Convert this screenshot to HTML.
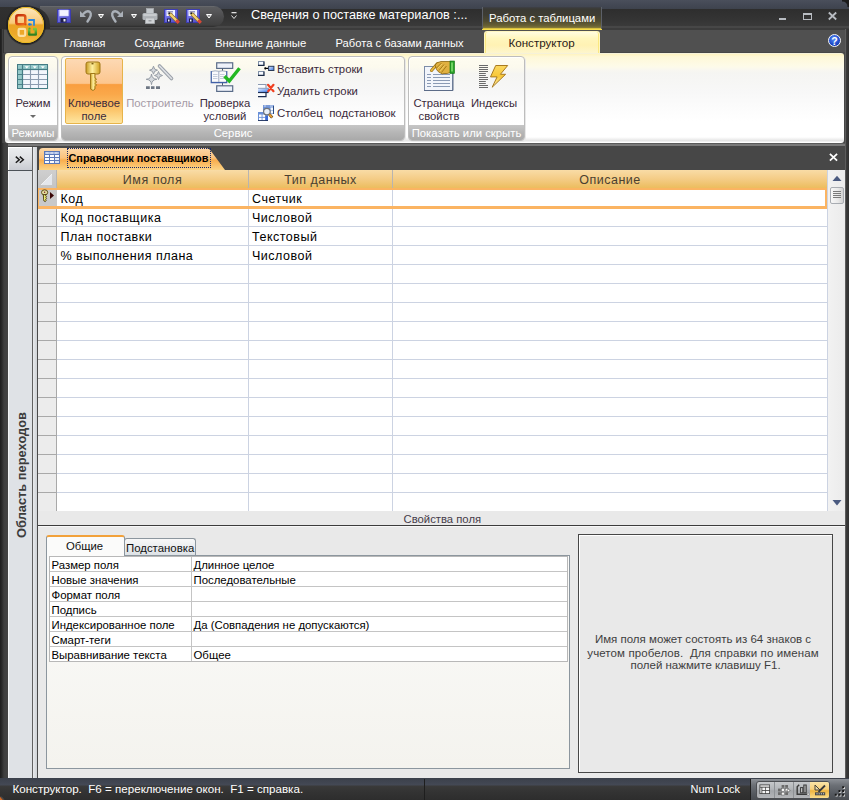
<!DOCTYPE html>
<html><head><meta charset="utf-8">
<style>
*{margin:0;padding:0;box-sizing:border-box}
html,body{width:849px;height:800px;overflow:hidden;background:#2f2f2f;font-family:"Liberation Sans",sans-serif;font-size:12px;color:#000}
.a{position:absolute}
.t{position:absolute;white-space:nowrap;line-height:14px}
svg{position:absolute;overflow:visible}
#title{left:0;top:0;width:849px;height:30px;background:linear-gradient(#4a4f5b 0,#434854 5px,#3e434d 9px,#2e2e2e 9px,#333 18px,#3a3a3a 26px,#474747 26.5px,#474747 28.5px,#3c3c3c 28.5px,#3c3c3c 30px)}
#tabs{left:0;top:30px;width:849px;height:23px;background:linear-gradient(#505050,#505050 22px,#474747 22px)}
#ribbon{left:5px;top:53px;width:839px;height:90px;border-radius:3px 3px 3px 3px;background:linear-gradient(#eceff2 0,#fff4c0 1px,#fef8d8 4px,#fdfbea 14px,#f8f7f0 17px,#f5f5f2 20px,#f8f8f8 40px,#fcfcfc 55px,#fff 68px,#fff 84px,#f8f8f8 85px,#e2e2e2 88px,#fff 89px,#fff 90px)}
#band{left:3px;top:143px;width:842px;height:4px;background:linear-gradient(#5a5a5a 0,#5a5a5a 1px,#7a7a7a 1px,#7a7a7a 3px,#474747 3px)}
.grp{position:absolute;top:56px;height:85px;border:1px solid #bdbdbd;border-radius:4px;background:linear-gradient(#fefcf0 0,#fcfaee 10px,#f5f5f2 17px,#f7f7f7 35px,#fdfdfd 55px,#fff 69px);overflow:hidden;box-shadow:1px 1px 0 #e8e8e8,inset 1px 1px 0 #fff}
.grp .lbl{position:absolute;left:0;right:0;bottom:0;height:15px;background:linear-gradient(#c6c6c6,#b6b6b6 50%,#a9a9a9);color:#fff;text-align:center;font-size:11.3px;line-height:16px}
.btxt{position:absolute;text-align:center;font-size:11.3px;line-height:13px;color:#3b2a3b;white-space:nowrap}
#leftb{left:0;top:143px;width:8px;height:635px;background:linear-gradient(90deg,#1d1d1d 0,#2a2a2a 2px,#353535 3px,#3e3e3e 4px,#434343 8px)}
#rightb{left:845px;top:29px;width:4px;height:749px;background:linear-gradient(90deg,#5c5c5c 0,#5c5c5c 1.5px,#3a3a3a 1.5px,#303030 4px)}
#nav{left:8px;top:147px;width:25px;height:631px;background:#dfe2e6;border-right:1px solid #626262;border-left:1px solid #f2f3f5}
#navbtn{left:8px;top:147px;width:24px;height:24px;background:linear-gradient(#eceef0,#dfe1e4 50%,#c9ccd2);border-bottom:1px solid #4c5258;box-shadow:inset 1px 1px 0 #fff}
#strip{left:33px;top:147px;width:5px;height:631px;background:linear-gradient(90deg,#e8eaec,#cfd2d6);border-right:1px solid #4a4a4a}
#doctabs{left:38px;top:147px;width:807px;height:23px;background:#474747}
#grid{left:38px;top:170px;width:789px;height:341px;background:#fff}
#gridfoot{left:38px;top:511px;width:807px;height:14px;background:#e9e9e9}
#props{left:38px;top:525px;width:807px;height:253px;background:#e9e9e9;border-top:1px solid #3c3c3c;box-shadow:inset 0 1px 0 #f8f8f8}
#status{left:0;top:778px;width:849px;height:22px;background:linear-gradient(#3b404b 0,#444955 7px,#3a3a3a 8px,#333 14px,#2d2d2d 22px)}
.gt{font-size:12.5px;letter-spacing:.5px;color:#000;line-height:14px}
.gh{font-size:12.5px;letter-spacing:.5px;color:#4a4030;line-height:14px}
.pt{font-size:11.4px;color:#000;line-height:14px}
.hx{font-size:11.5px;color:#3e3e3e;text-align:center;line-height:14px}
</style></head><body>
<!-- TITLE -->
<div id="title" class="a"></div>
<svg style="left:842px;top:0" width="7" height="7" viewBox="0 0 7 7"><path d="M0 0 H7 V7 H5.5 Q5.5 1.5 0 1.5Z" fill="#1c1c1c"/></svg>
<div id="tabs" class="a"></div>
<div class="a" style="left:0;top:27px;width:4px;height:120px;background:linear-gradient(90deg,#1d1d1d 0,#262626 1.5px,#464646 2px,#3a3a3a 3px,#2e2e2e 4px)"></div>
<div id="rightb" class="a"></div>
<!-- QAT -->
<div class="a" style="left:40px;top:6px;width:184px;height:21px;border-radius:0 10.5px 10.5px 0;background:linear-gradient(#707276 0,#5c5d60 1px,#555557 6px,#4a4a4b 12px,#404040 19px,#2c2c2c 21px)"></div>
<div class="a" style="left:0px;top:7px;width:50px;height:22px;border-radius:0 18px 0 0;background:linear-gradient(#303030,#2c2c2c)"></div>
<!-- office button -->
<div class="a" style="left:6px;top:5px;width:40px;height:40px;border-radius:50%;background:rgba(30,30,30,.55)"></div>
<div class="a" style="left:8px;top:7px;width:36px;height:36px;border-radius:50%;background:linear-gradient(#fde9c0 0,#f8c878 45%,#eba424 50%,#eda82a 75%,#f6c048 100%);box-shadow:0 0 0 1px #e8b820 inset,0 1px 2px rgba(0,0,0,.6)"></div>
<svg style="left:14px;top:13px" width="24" height="24" viewBox="0 0 24 24">
 <defs><linearGradient id="rg" x1="0" y1="0" x2="1" y2="1"><stop offset="0" stop-color="#c02808"/><stop offset="1" stop-color="#f07020"/></linearGradient>
 <linearGradient id="gg" x1="0" y1="0" x2="0" y2="1"><stop offset="0" stop-color="#80c840"/><stop offset="1" stop-color="#308020"/></linearGradient></defs>
 <rect x="2.3" y="2.2" width="9" height="9" rx="2" fill="none" stroke="url(#rg)" stroke-width="2.5"/>
 <path d="M15 7 H20 V12 M15 11.5 H17" fill="none" stroke="#2a88e0" stroke-width="1.8" stroke-linecap="round"/>
 <rect x="4.6" y="15.8" width="6.6" height="7" rx="1.2" fill="none" stroke="#fde6b0" stroke-width="2.2" opacity=".9"/>
 <path d="M15.2 16 V21.6 H21.8 V16 H19" fill="none" stroke="url(#gg)" stroke-width="2.4" stroke-linejoin="round"/>
 <circle cx="11.5" cy="11.3" r="1.1" fill="#e05010"/><circle cx="15.5" cy="11.3" r="1.1" fill="#2070d0"/><circle cx="15.5" cy="15.5" r="1.1" fill="#50b030"/>
</svg>
<!-- save -->
<svg style="left:57px;top:9px" width="14" height="14" viewBox="0 0 14 14">
 <defs><linearGradient id="fl" x1="0" y1="0" x2="1" y2="1"><stop offset="0" stop-color="#8484f0"/><stop offset="1" stop-color="#4c4cc8"/></linearGradient></defs>
 <rect x="0.5" y="0.5" width="13" height="13" fill="url(#fl)" stroke="#3c3cb0"/>
 <rect x="2.5" y="1" width="9" height="6" fill="#f4f4ff"/><rect x="2.5" y="1" width="9" height="6" fill="none" stroke="#c8c8f0" stroke-width=".5"/>
 <rect x="3.5" y="9" width="6" height="4.5" fill="#20204a"/><rect x="6.5" y="10" width="2" height="2.5" fill="#f0f0ff"/>
</svg>
<!-- undo -->
<svg style="left:79px;top:9px" width="14" height="14" viewBox="0 0 14 14">
 <path d="M1 2 V8 H7Z" fill="#aab0b8"/><path d="M4.5 4.8 Q8 0.8 11 3 Q13.5 5.5 8.5 12.5" fill="none" stroke="#aab0b8" stroke-width="2.4" stroke-linecap="round"/>
</svg>
<svg style="left:97.5px;top:14px" width="6" height="4.5" viewBox="0 0 6 4.5"><path d="M0.5 0.5H5.5L3 4Z" fill="#8a8a8a" stroke="#fff" stroke-width="1" stroke-linejoin="round"/></svg>
<svg style="left:110px;top:9px" width="14" height="14" viewBox="0 0 14 14">
 <path d="M13 2 V8 H7Z" fill="#aab0b8"/><path d="M9.5 4.8 Q6 0.8 3 3 Q0.5 5.5 5.5 12.5" fill="none" stroke="#aab0b8" stroke-width="2.4" stroke-linecap="round"/>
</svg>
<svg style="left:130.5px;top:14px" width="6" height="4.5" viewBox="0 0 6 4.5"><path d="M0.5 0.5H5.5L3 4Z" fill="#8a8a8a" stroke="#fff" stroke-width="1" stroke-linejoin="round"/></svg>
<!-- print -->
<svg style="left:142px;top:8px" width="16" height="16" viewBox="0 0 16 16">
 <rect x="4.5" y="0.5" width="7" height="5" fill="#c4c8cc" stroke="#a8acb0" stroke-width=".8"/>
 <rect x="0.5" y="5" width="15" height="7" rx="1.5" fill="#b0b4b8"/><rect x="1.5" y="6" width="13" height="2" fill="#c8cbce"/>
 <rect x="3.5" y="10" width="9" height="5.5" fill="#d0d3d6" stroke="#a8acb0" stroke-width=".8"/><rect x="6.5" y="12" width="3" height="1.5" fill="#9a9ea2"/>
</svg>
<!-- save pencil x2 -->
<svg style="left:164px;top:9px" width="16" height="14" viewBox="0 0 16 14">
 <rect x="0.5" y="0.5" width="13" height="13" fill="url(#fl)" stroke="#3c3cb0"/>
 <rect x="2.5" y="1" width="8.5" height="6" fill="#f4f4ff"/><path d="M3.5 2.5H9M3.5 4H9" stroke="#7070a0" stroke-width=".7"/>
 <rect x="3" y="9.5" width="4" height="4" fill="#20204a"/><rect x="4" y="10.5" width="1.5" height="2" fill="#f0f0ff"/>
 <path d="M5.5 4.5 L13 12" stroke="#8a6a20" stroke-width="3.6" stroke-linecap="butt"/><path d="M5.5 4.5 L13 12" stroke="#f0d070" stroke-width="2.4"/>
 <path d="M12.2 11.2 L14.8 13.8" stroke="#d84838" stroke-width="3.2"/>
 <path d="M4.6 3.6 L6 5" stroke="#202020" stroke-width="1.6"/>
</svg>
<svg style="left:186px;top:9px" width="16" height="14" viewBox="0 0 16 14">
 <rect x="0.5" y="0.5" width="13" height="13" fill="url(#fl)" stroke="#3c3cb0"/>
 <rect x="2.5" y="1" width="8.5" height="6" fill="#f4f4ff"/><path d="M3.5 2.5H9M3.5 4H9" stroke="#7070a0" stroke-width=".7"/>
 <rect x="3" y="9.5" width="4" height="4" fill="#20204a"/><rect x="4" y="10.5" width="1.5" height="2" fill="#f0f0ff"/>
 <path d="M5.5 4.5 L13 12" stroke="#8a6a20" stroke-width="3.6" stroke-linecap="butt"/><path d="M5.5 4.5 L13 12" stroke="#f0d070" stroke-width="2.4"/>
 <path d="M12.2 11.2 L14.8 13.8" stroke="#d84838" stroke-width="3.2"/>
 <path d="M4.6 3.6 L6 5" stroke="#202020" stroke-width="1.6"/>
</svg>
<svg style="left:206px;top:14px" width="6" height="4.5" viewBox="0 0 6 4.5"><path d="M0.5 0.5H5.5L3 4Z" fill="#8a8a8a" stroke="#fff" stroke-width="1" stroke-linejoin="round"/></svg>
<!-- customize -->
<svg style="left:231px;top:12px" width="6" height="8" viewBox="0 0 6 8"><rect x="0.5" y="0" width="5" height="1.3" fill="#e0e0e0"/><path d="M0.5 3.5 L3 6.5 L5.5 3.5" fill="none" stroke="#e0e0e0" stroke-width="1"/></svg>
<div class="t" style="left:251px;top:8.3px;font-size:12.7px;color:#fff">Сведения о поставке материалов :...</div>
<!-- context tab header -->
<div class="a" style="left:482px;top:7px;width:120px;height:23px;background:linear-gradient(#3e4048 0,#3a3a34 2px,#3e3d33 8px,#4e4a30 14px,#6a6234 19px,#8a7e3a 21px,#d8c040 21.5px,#f6de4a 22.5px,#3a3a3a 23px)"></div>
<div class="a" style="left:482px;top:7px;width:1px;height:22px;background:#5c6068"></div>
<div class="a" style="left:601px;top:7px;width:1px;height:22px;background:#5c6068"></div>
<div class="t" style="left:489px;top:11px;font-size:11.3px;color:#fff">Работа с таблицами</div>
<!-- window buttons -->
<div class="a" style="left:779px;top:18px;width:7px;height:2px;background:#b8bcc2"></div>
<div class="a" style="left:803px;top:13px;width:9px;height:7px;border:1px solid #b8bcc2;border-top-width:2px"></div>
<svg style="left:828px;top:12px" width="9" height="8" viewBox="0 0 9 8"><path d="M0.8 0.5 L8.2 7.5 M8.2 0.5 L0.8 7.5" stroke="#b8bcc2" stroke-width="1.8"/></svg>
<!-- tabs -->
<div class="t" style="left:64px;top:36.4px;font-size:10.9px;color:#fff">Главная</div>
<div class="t" style="left:134.5px;top:36.4px;font-size:11.1px;color:#fff">Создание</div>
<div class="t" style="left:215px;top:36.4px;font-size:11.35px;color:#fff">Внешние данные</div>
<div class="t" style="left:335.5px;top:36.4px;font-size:11.2px;color:#fff">Работа с базами данных</div>
<div class="a" style="left:484px;top:31px;width:116px;height:23px;border-radius:3px 3px 0 0;border:1px solid #fff6c0;border-bottom:0;background:linear-gradient(#fffce0,#fff6bc 30%,#fff2b4 60%,#fdf6d0);box-shadow:inset 1px 0 0 #fae880,inset -1px 0 0 #fae880"></div>
<div class="t" style="left:508.5px;top:36.4px;font-size:11.6px;color:#2a1a1a">Конструктор</div>
<!-- help -->
<div class="a" style="left:828px;top:34px;width:13px;height:13px;border-radius:50%;border:1.2px solid #f4f6fa;background:radial-gradient(circle at 45% 35%,#5a8ef8,#1c48c8 60%,#0a2a90)"></div>
<div class="t" style="left:831.2px;top:33.6px;font-size:10.5px;font-weight:bold;color:#fff;line-height:14px">?</div>

<!-- RIBBON -->
<div class="a" style="left:3px;top:53px;width:842px;height:94px;background:#474747"></div>
<div id="ribbon" class="a"></div>
<div id="band" class="a"></div>
<div id="ribcontent">
<!-- group Режимы -->
<div class="grp" style="left:8px;width:50px"><div class="lbl">Режимы</div></div>
<svg style="left:17px;top:64px" width="32" height="26" viewBox="0 0 32 26">
 <rect x="1.5" y="1.5" width="30" height="24" fill="#d8d8d8" opacity=".5"/>
 <rect x="0.5" y="0.5" width="30" height="24" fill="#f2f6fc" stroke="#447c84"/>
 <rect x="1" y="1" width="29" height="4" fill="#94c8c8"/>
 <rect x="1" y="1" width="4.5" height="23" fill="#94c8c8"/>
 <path d="M5.5 10.5 H30 M5.5 15.5 H30 M5.5 20.5 H30 M13.5 5 V24 M21.5 5 V24" stroke="#8c9cb0" stroke-width="1.1"/>
 <path d="M13.5 1 V5 M21.5 1 V5" stroke="#6a9ca4" stroke-width="1"/>
 <path d="M1 10.5 H5.5 M1 15.5 H5.5 M1 20.5 H5.5" stroke="#4a8088" stroke-width="1"/>
 <path d="M1 5.5 H30" stroke="#447c84" stroke-width="1.2"/><path d="M5.5 1 V24" stroke="#447c84" stroke-width="1.2"/>
 <path d="M7.8 2.3 H11.8 L9.8 4.4Z M15.8 2.3 H19.8 L17.8 4.4Z M23.8 2.3 H27.8 L25.8 4.4Z" fill="#fff"/>
</svg>
<div class="btxt" style="left:8px;width:50px;top:97px">Режим</div>
<svg style="left:30px;top:114.5px" width="6" height="3" viewBox="0 0 6 3"><path d="M0 0H6L3 3Z" fill="#6a6a6a"/></svg>
<!-- group Сервис -->
<div class="grp" style="left:61px;width:344px"><div class="lbl">Сервис</div></div>
<div class="a" style="left:65px;top:58px;width:58px;height:66px;border:1px solid #e7b44a;border-radius:2px;background:linear-gradient(#fdd9b4 0,#fcc68e 38%,#f99e40 40%,#faa84a 55%,#fcc66c 80%,#fee6a0 100%)"></div>
<svg style="left:85px;top:61px" width="16" height="30" viewBox="0 0 16 30">
 <defs><linearGradient id="kg" x1="0" y1="0" x2="1" y2="0"><stop offset="0" stop-color="#c89a20"/><stop offset=".45" stop-color="#fff0a0"/><stop offset="1" stop-color="#d0a020"/></linearGradient></defs>
 <rect x="1" y="1" width="14" height="12" rx="2" fill="url(#kg)" stroke="#a07818" stroke-width="1"/>
 <rect x="6.5" y="1.8" width="2" height="1.6" fill="#806010"/>
 <path d="M5.5 12.5 H10 V17 L11.5 18 L10.2 19.5 L11.5 21 L10.2 22.5 L11.5 24 L10 25.5 V28 L8 29.5 L5.5 28Z" fill="url(#kg)" stroke="#a07818" stroke-width="1"/>
</svg>
<div class="btxt" style="left:65px;width:58px;top:97px">Ключевое<br>поле</div>
<svg style="left:146px;top:63px" width="28" height="27" viewBox="0 0 28 27">
 <path d="M13.5 3 L25.5 15.5" stroke="#9aa0a8" stroke-width="3.6" stroke-linecap="round"/><path d="M13.5 3 L25.5 15.5" stroke="#dfe2e6" stroke-width="1.6" stroke-linecap="round"/>
 <path d="M7.5 3.2 Q7.74 6.96 11.5 7.2 Q7.74 7.44 7.5 11.2 Q7.26 7.44 3.5 7.2 Q7.26 6.96 7.5 3.2Z" fill="#d4d8dc" stroke="#959ca5" stroke-width="1"/>
 <path d="M12.5 8.5 Q12.74 12.26 16.5 12.5 Q12.74 12.74 12.5 16.5 Q12.26 12.74 8.5 12.5 Q12.26 12.26 12.5 8.5Z" fill="#d4d8dc" stroke="#959ca5" stroke-width="1"/>
 <path d="M5.5 11.0 Q5.82 15.98 10.8 16.3 Q5.82 16.62 5.5 21.6 Q5.18 16.62 0.20000000000000018 16.3 Q5.18 15.98 5.5 11.0Z" fill="#d4d8dc" stroke="#959ca5" stroke-width="1"/>
 <path d="M0 23.3h3.8v2.7h-3.8z M5 23.3h3.5v2.7h-3.5z M10 23.3h4v2.7h-4z" fill="#6e7784"/>
</svg>
<div class="btxt" style="left:122px;width:76px;top:97px;color:#a69aa6">Построитель</div>
<svg style="left:210px;top:62px" width="31" height="30" viewBox="0 0 31 30">
 <rect x="6.7" y="0.8" width="16" height="5.6" fill="#eef2fa" stroke="#5a6c88" stroke-width="1.2"/>
 <rect x="6.7" y="23.8" width="16" height="5.6" fill="#eef2fa" stroke="#5a6c88" stroke-width="1.2"/>
 <path d="M12.5 6.5 V23.5" stroke="#4a5a70" stroke-width="1"/>
 <path d="M1.5 9.5 Q5 8.3 8.8 9.3 Q12.5 8.3 16.5 9.5 V20.2 H1.5Z" fill="#fafbfd" stroke="#8898b0" stroke-width=".8"/>
 <path d="M1.2 9 V20.6 H16.8 V9" fill="none" stroke="#4060a8" stroke-width="1.1"/>
 <path d="M8.8 9.3 V20" stroke="#a0acc0" stroke-width="1"/>
 <path d="M3 12.5 H7.5 M3 14.5 H7.5 M3 16.5 H7.5 M10 12.5 H14.5 M10 14.5 H14.5 M10 16.5 H14.5" stroke="#b8c2d2" stroke-width=".8"/>
 <path d="M14.5 14.3 L19.3 19 L29.5 6.3" fill="none" stroke="#22b822" stroke-width="3.4" stroke-linejoin="miter" stroke-linecap="butt"/>
</svg>
<div class="btxt" style="left:195px;width:60px;top:97px">Проверка<br>условий</div>
<!-- small buttons -->
<svg style="left:258px;top:61px" width="17" height="15" viewBox="0 0 17 15">
 <defs><linearGradient id="ib" x1="0" y1="0" x2="1" y2="1"><stop offset="0" stop-color="#e8f0ff"/><stop offset="1" stop-color="#3070e0"/></linearGradient></defs>
 <rect x="0.5" y="0.5" width="5.3" height="4" fill="#f6faff" stroke="#8090a8" stroke-width="1"/><path d="M0 4.4 H6 V0.5" fill="none" stroke="#1c2c48" stroke-width="1.1"/>
 <rect x="0.5" y="10.5" width="5.3" height="4" fill="#f6faff" stroke="#8090a8" stroke-width="1"/><path d="M0 14.4 H6 V10.5" fill="none" stroke="#1c2c48" stroke-width="1.1"/>
 <path d="M6.3 7.4 H10.5 M7.3 6.2 V8.6" stroke="#000" stroke-width="1.3"/>
 <rect x="10.6" y="5.3" width="5.3" height="4.2" fill="url(#ib)" stroke="#2a3a58" stroke-width="1"/>
</svg>
<div class="t" style="left:277px;top:62px;font-size:11.3px;color:#3b2a3b">Вставить строки</div>
<svg style="left:258px;top:83px" width="17" height="15" viewBox="0 0 17 15">
 <defs><linearGradient id="bb" x1="0" y1="0" x2="1" y2="1"><stop offset="0" stop-color="#f0f4ff"/><stop offset="1" stop-color="#3a7ef0"/></linearGradient></defs>
 <rect x="0" y="2" width="7.5" height="3.4" fill="#fafcff"/><rect x="0" y="10" width="7.5" height="3.4" fill="#fafcff"/>
 <path d="M0 1.5 H8 V5.4" fill="none" stroke="#8a98b0" stroke-width="1.1"/>
 <rect x="0" y="5" width="11" height="4.2" fill="url(#bb)"/>
 <path d="M0 5.3 H11" stroke="#8a9ab4" stroke-width=".9"/>
 <path d="M0 9.5 H10.5" stroke="#1c2c50" stroke-width="1.2"/>
 <path d="M8 9.5 V13.6 H0" fill="none" stroke="#1c2c50" stroke-width="1.2"/>
 <path d="M10 1.8 L15.5 8.2 M15.5 1.8 L10.2 8.2" stroke="#f04020" stroke-width="2.2" stroke-linecap="round"/>
</svg>
<div class="t" style="left:277px;top:84px;font-size:11.3px;color:#3b2a3b">Удалить строки</div>
<svg style="left:258px;top:105px" width="17" height="16" viewBox="0 0 17 16">
 <rect x="5" y="0" width="11" height="8.6" fill="#6a90d8"/>
 <rect x="5" y="0" width="11" height="2" fill="#7a9ad8"/>
 <path d="M6 1 H8 M12 1 H15" stroke="#dfe8f8" stroke-width=".8"/>
 <rect x="12.5" y="2.5" width="2.5" height="2.5" fill="#f4f8ff"/><rect x="12.5" y="5.5" width="2.5" height="2.5" fill="#f4f8ff"/>
 <rect x="15" y="1" width="1" height="8" fill="#2a4a80"/>
 <rect x="0" y="7" width="10" height="9" fill="#6a90d8"/>
 <rect x="1" y="9.5" width="2.6" height="2.4" fill="#fff"/><rect x="4.5" y="9.5" width="2.6" height="2.4" fill="#fff"/>
 <rect x="1" y="12.8" width="2.6" height="2.4" fill="#fff"/><rect x="4.5" y="12.8" width="2.6" height="2.4" fill="#fff"/>
 <rect x="7.5" y="11" width="2.5" height="5" fill="#3a6ad8"/>
 <rect x="0" y="15.2" width="10" height=".8" fill="#1a2a50"/>
 <circle cx="8.9" cy="6.6" r="3.3" fill="#e8f0fa" stroke="#70747a" stroke-width="1.2"/>
 <path d="M11.4 9.4 L14.2 12.6" stroke="#3a2a10" stroke-width="2.8"/><path d="M11.4 9.4 L14 12.4" stroke="#f0a030" stroke-width="1.8"/>
</svg>
<div class="t" style="left:277px;top:106px;font-size:11.5px;color:#3b2a3b">Столбец&nbsp; подстановок</div>
<!-- group Показать или скрыть -->
<div class="grp" style="left:408px;width:117px"><div class="lbl">Показать или скрыть</div></div>
<svg style="left:423px;top:60px" width="32" height="32" viewBox="0 0 32 32">
 <rect x="1.5" y="6.5" width="28" height="24" fill="#f2f5fb" stroke="#7c8ca8"/>
 <path d="M1 30.5 H30 V7" fill="none" stroke="#5c6c88" stroke-width="1"/>
 <path d="M4 14.5 H8 M10 14.5 H27 M4 17.5 H8 M10 17.5 H27 M4 20.5 H8 M10 20.5 H27 M4 23.5 H8 M10 23.5 H27 M4 26.5 H8 M10 26.5 H27" stroke="#8a9ab4" stroke-width="1.1"/>
 <path d="M8.5 10.5 L14.5 3.5" stroke="#9a7010" stroke-width="3" stroke-linecap="round"/>
 <path d="M8.5 10.5 L14.5 3.5" stroke="#e8b840" stroke-width="1.8" stroke-linecap="round"/>
 <path d="M12 5 Q14 2 18 1.5 L27.5 1.5 L27.5 12.5 Q24 14 21 13.5 Q19.5 14.5 17.5 13 Q15 12 13.5 9.5Z" fill="#e0b040" stroke="#8a6410" stroke-width=".8"/>
 <path d="M13.5 8 L18.5 3 M16 10.5 L21 4.5 M18.5 12.5 L23.5 6" stroke="#a87c18" stroke-width="1"/>
 <path d="M14.5 8.5 L19 4 M17 11 L21.5 5.5" stroke="#f8d870" stroke-width=".7"/>
 <rect x="27" y="1" width="4.5" height="12.5" fill="#28a028" stroke="#107010" stroke-width=".6"/>
 <rect x="28.2" y="2.5" width="1.6" height="9" fill="#80e070"/>
</svg>
<div class="btxt" style="left:410px;width:58px;top:97px">Страница<br>свойств</div>
<svg style="left:478px;top:63px" width="31" height="27" viewBox="0 0 31 27">
 <defs><linearGradient id="lg" x1="0" y1="0" x2="0" y2="1"><stop offset="0" stop-color="#fbd860"/><stop offset=".5" stop-color="#f8c838"/><stop offset="1" stop-color="#fff4b8"/></linearGradient></defs>
 <path d="M1 2.5 H10 M1 4.5 H10 M1 6.5 H10 M1 8.5 H10 M1 10.5 H7.8 M1 12.5 H7.8 M1 14.5 H10 M1 16.5 H10 M1 18.5 H7.8 M1 20.5 H7.8 M1 22.5 H10 M1 24.5 H10" stroke="#6a6a6a" stroke-width="1.1"/>
 <path d="M17.7 2.5 L29.7 2.5 L22.4 11.3 L27.6 11.3 L14.2 24.2 L19.1 13.9 L12.5 13.9Z" fill="url(#lg)" stroke="#a87a20" stroke-width="1" stroke-linejoin="round"/>
</svg>
<div class="btxt" style="left:468px;width:52px;top:97px">Индексы</div>
</div>

<div id="leftb" class="a"></div>
<div id="nav" class="a"></div>
<div id="navbtn" class="a"></div>
<svg style="left:14.5px;top:155.5px" width="10" height="8" viewBox="0 0 10 8"><path d="M0.8 0.6 L4.3 3.7 L0.8 6.8 M4.8 0.6 L8.3 3.7 L4.8 6.8" fill="none" stroke="#1a1a1a" stroke-width="1.5"/></svg>
<div class="t" style="left:-41px;top:467.5px;width:126px;text-align:center;font-size:12.85px;font-weight:bold;color:#3c3c3c;transform:rotate(-90deg);line-height:14px">Область переходов</div>
<div id="strip" class="a"></div>
<div id="doctabs" class="a"></div>
<!-- doc tab -->
<svg style="left:38px;top:147px" width="190" height="23" viewBox="0 0 190 23">
 <defs><linearGradient id="dtg" x1="0" y1="0" x2="0" y2="1"><stop offset="0" stop-color="#fcd8a8"/><stop offset=".45" stop-color="#fbc27c"/><stop offset=".55" stop-color="#f9ad4e"/><stop offset="1" stop-color="#fcd486"/></linearGradient></defs>
 <path d="M1 23 V5 Q1 1 5 1 H168 Q171 1 173 4 L187 23Z" fill="url(#dtg)"/>
</svg>
<svg style="left:44px;top:151px" width="16" height="13" viewBox="0 0 16 13">
 <rect x="0" y="0" width="16" height="13" fill="#5a78b8"/>
 <rect x="1" y="1" width="14" height="2" fill="#a8bce4"/>
 <path d="M2 2 H4.5 M6.5 2 H9 M11 2 H13.5" stroke="#e8eef8" stroke-width="1"/>
 <g fill="#fbfcfe"><rect x="1" y="4" width="4" height="2"/><rect x="6" y="4" width="4" height="2"/><rect x="11" y="4" width="4" height="2"/>
 <rect x="1" y="7" width="4" height="2"/><rect x="6" y="7" width="4" height="2"/><rect x="11" y="7" width="4" height="2" fill="#e4ecf8"/>
 <rect x="1" y="10" width="4" height="2"/><rect x="6" y="10" width="4" height="2"/><rect x="11" y="10" width="4" height="2" fill="#d8e4f6"/></g>
</svg>
<div class="a" style="left:67px;top:148px;width:144px;height:20px;border:1px dotted #1a2a6a"></div>
<div class="t" style="left:68.5px;top:151px;font-size:10.9px;font-weight:bold;color:#000">Справочник поставщиков</div>
<svg style="left:828.5px;top:153px" width="9" height="8.5" viewBox="0 0 9 8.5"><path d="M0.9 0.9 L8.1 7.6 M8.1 0.9 L0.9 7.6" stroke="#fff" stroke-width="1.8"/></svg>
<!-- GRID -->
<div id="grid" class="a"></div>
<div class="a" style="left:38px;top:170px;width:789px;height:18px;background:linear-gradient(#f9dca6,#f4cc86 50%,#ecbd5e)"></div>
<div class="a" style="left:38px;top:170px;width:19px;height:18px;background:linear-gradient(#cfcfcf,#c4c4c4);border-right:1px solid #b5b5b5"></div>
<svg style="left:40px;top:173px" width="13" height="13" viewBox="0 0 13 13"><path d="M12 1 V12 H1Z" fill="#e4e7ec"/><path d="M12 1 L1 12" stroke="#f6f7f8" stroke-width=".8"/></svg>
<div class="a" style="left:248px;top:170px;width:1px;height:18px;background:#b8b4b0"></div>
<div class="a" style="left:392px;top:170px;width:1px;height:18px;background:#b8b4b0"></div>
<div class="t gh" style="left:57px;width:191px;top:173.3px;text-align:center">Имя поля</div>
<div class="t gh" style="left:249px;width:143px;top:173.3px;text-align:center">Тип данных</div>
<div class="t gh" style="left:393px;width:434px;top:173.3px;text-align:center">Описание</div>
<!-- row selector column -->
<div class="a" style="left:38px;top:188px;width:19px;height:323px;background:#ececec;border-right:1px solid #a9a9a9"></div>
<div class="a" style="left:57px;top:188px;width:1px;height:323px;background:#fff"></div>
<div class="a" style="left:248px;top:188px;width:1px;height:323px;background:#ccd3e2"></div>
<div class="a" style="left:392px;top:188px;width:1px;height:323px;background:#ccd3e2"></div>
<div class="a" style="left:827px;top:170px;width:1px;height:341px;background:#ccd3e2"></div>
<div class="a" style="left:57px;top:226px;width:770px;height:1px;background:#ccd3e2"></div>
<div class="a" style="left:38px;top:226px;width:18px;height:1px;background:#a9a9a9"></div>
<div class="a" style="left:57px;top:245px;width:770px;height:1px;background:#ccd3e2"></div>
<div class="a" style="left:38px;top:245px;width:18px;height:1px;background:#a9a9a9"></div>
<div class="a" style="left:57px;top:264px;width:770px;height:1px;background:#ccd3e2"></div>
<div class="a" style="left:38px;top:264px;width:18px;height:1px;background:#a9a9a9"></div>
<div class="a" style="left:57px;top:283px;width:770px;height:1px;background:#ccd3e2"></div>
<div class="a" style="left:38px;top:283px;width:18px;height:1px;background:#a9a9a9"></div>
<div class="a" style="left:57px;top:302px;width:770px;height:1px;background:#ccd3e2"></div>
<div class="a" style="left:38px;top:302px;width:18px;height:1px;background:#a9a9a9"></div>
<div class="a" style="left:57px;top:321px;width:770px;height:1px;background:#ccd3e2"></div>
<div class="a" style="left:38px;top:321px;width:18px;height:1px;background:#a9a9a9"></div>
<div class="a" style="left:57px;top:340px;width:770px;height:1px;background:#ccd3e2"></div>
<div class="a" style="left:38px;top:340px;width:18px;height:1px;background:#a9a9a9"></div>
<div class="a" style="left:57px;top:359px;width:770px;height:1px;background:#ccd3e2"></div>
<div class="a" style="left:38px;top:359px;width:18px;height:1px;background:#a9a9a9"></div>
<div class="a" style="left:57px;top:378px;width:770px;height:1px;background:#ccd3e2"></div>
<div class="a" style="left:38px;top:378px;width:18px;height:1px;background:#a9a9a9"></div>
<div class="a" style="left:57px;top:397px;width:770px;height:1px;background:#ccd3e2"></div>
<div class="a" style="left:38px;top:397px;width:18px;height:1px;background:#a9a9a9"></div>
<div class="a" style="left:57px;top:416px;width:770px;height:1px;background:#ccd3e2"></div>
<div class="a" style="left:38px;top:416px;width:18px;height:1px;background:#a9a9a9"></div>
<div class="a" style="left:57px;top:435px;width:770px;height:1px;background:#ccd3e2"></div>
<div class="a" style="left:38px;top:435px;width:18px;height:1px;background:#a9a9a9"></div>
<div class="a" style="left:57px;top:454px;width:770px;height:1px;background:#ccd3e2"></div>
<div class="a" style="left:38px;top:454px;width:18px;height:1px;background:#a9a9a9"></div>
<div class="a" style="left:57px;top:473px;width:770px;height:1px;background:#ccd3e2"></div>
<div class="a" style="left:38px;top:473px;width:18px;height:1px;background:#a9a9a9"></div>
<div class="a" style="left:57px;top:492px;width:770px;height:1px;background:#ccd3e2"></div>
<div class="a" style="left:38px;top:492px;width:18px;height:1px;background:#a9a9a9"></div>
<div class="t gt" style="left:60.5px;top:192.2px">Код</div>
<div class="t gt" style="left:252px;top:192.2px">Счетчик</div>
<div class="t gt" style="left:60.5px;top:211.2px">Код поставщика</div>
<div class="t gt" style="left:252px;top:211.2px">Числовой</div>
<div class="t gt" style="left:60.5px;top:230.2px">План поставки</div>
<div class="t gt" style="left:252px;top:230.2px">Текстовый</div>
<div class="t gt" style="left:60.5px;top:249.2px">% выполнения плана</div>
<div class="t gt" style="left:252px;top:249.2px">Числовой</div>
<!-- selected row -->
<div class="a" style="left:39px;top:190px;width:18px;height:16px;background:#c9c9c9"></div>
<div class="a" style="left:38px;top:188px;width:789px;height:21px;border:2px solid #fbb462;border-left-width:1px;border-bottom-width:3px"></div>
<svg style="left:40px;top:189px" width="16" height="14" viewBox="0 0 16 14">
 <ellipse cx="4.6" cy="3.4" rx="3.1" ry="2.6" fill="#e2dfa0" stroke="#5c4a18" stroke-width="1"/>
 <circle cx="4.6" cy="3.2" r=".75" fill="#802020"/>
 <path d="M3.3 5.6 L3.8 11.8 L5.2 12.6 L6.3 11.5 L5.6 10.6 L6.6 9.6 L5.8 8.7 L6.6 7.6 L5.6 6.7 L6 5.6Z" fill="#d8d860" stroke="#4a3a10" stroke-width=".9" stroke-linejoin="round"/>
 <path d="M4.5 6.5 V11" stroke="#f0f080" stroke-width=".8"/>
 <path d="M10 3 L14 6.5 L10 10Z" fill="#3a0606"/>
</svg>
<!-- scrollbar -->
<div class="a" style="left:828px;top:170px;width:17px;height:341px;background:linear-gradient(90deg,#f2f2f2,#ebebeb)"></div>
<svg style="left:832px;top:175px" width="10" height="7" viewBox="0 0 10 7"><path d="M0.5 6 L5 0.8 L9.5 6Z" fill="#4a5a80"/></svg>
<div class="a" style="left:829.5px;top:187px;width:14px;height:17px;border:1px solid #a8acb2;border-radius:2px;background:linear-gradient(90deg,#f8f8f8,#e8e8e8 60%,#d0d0d0)"></div>
<svg style="left:833px;top:191px" width="8" height="8" viewBox="0 0 8 8"><path d="M0 0.5H8M0 2.5H8M0 4.5H8M0 6.5H8" stroke="#7a7a7a" stroke-width="1"/></svg>
<svg style="left:832px;top:500px" width="10" height="6" viewBox="0 0 10 6"><path d="M0.5 0 L5 5.5 L9.5 0Z" fill="#4a5a80"/></svg>
<div id="gridfoot" class="a"></div>
<div class="t" style="left:403.5px;top:512px;font-size:11.3px;color:#463c4a">Свойства поля</div>
<!-- PROPS -->
<div id="props" class="a"></div>
<div class="a" style="left:46px;top:555px;width:524px;height:214px;border:1px solid #8c969e;border-top:0;background:linear-gradient(#fbfbfa,#f4f3ee)"></div>
<div class="a" style="left:46px;top:554.5px;width:79px;height:1px;background:#fafaf8"></div>
<div class="a" style="left:124px;top:538px;width:72px;height:17px;border:1px solid #8c969e;border-bottom:0;border-radius:3px 3px 0 0;background:linear-gradient(#f8f8f8,#dde2e6)"></div>
<div class="a" style="left:125px;top:555px;width:445px;height:1px;background:#8c969e"></div>
<div class="a" style="left:46px;top:535px;width:79px;height:21px;border:1px solid #8c969e;border-bottom:0;border-radius:3px 3px 0 0;background:#fbfbfa;border-top:2px solid #f2a13a"></div>
<div class="t" style="left:66px;top:539px;font-size:11.3px;color:#111">Общие</div>
<div class="t" style="left:126px;top:541px;font-size:11.4px;color:#111">Подстановка</div>
<div class="a" style="left:49px;top:556px;width:519px;height:106px;background:#fff;border:1px solid #b8b8b8"></div>
<div class="a" style="left:50px;top:571px;width:517px;height:1px;background:#c4c4c4"></div>
<div class="t pt" style="left:51.5px;top:558px">Размер поля</div>
<div class="t pt" style="left:193.5px;top:558px">Длинное целое</div>
<div class="a" style="left:50px;top:586px;width:517px;height:1px;background:#c4c4c4"></div>
<div class="t pt" style="left:51.5px;top:573px">Новые значения</div>
<div class="t pt" style="left:193.5px;top:573px">Последовательные</div>
<div class="a" style="left:50px;top:601px;width:517px;height:1px;background:#c4c4c4"></div>
<div class="t pt" style="left:51.5px;top:588px">Формат поля</div>
<div class="a" style="left:50px;top:616px;width:517px;height:1px;background:#c4c4c4"></div>
<div class="t pt" style="left:51.5px;top:603px">Подпись</div>
<div class="a" style="left:50px;top:631px;width:517px;height:1px;background:#c4c4c4"></div>
<div class="t pt" style="left:51.5px;top:618px">Индексированное поле</div>
<div class="t pt" style="left:193.5px;top:618px">Да (Совпадения не допускаются)</div>
<div class="a" style="left:50px;top:646px;width:517px;height:1px;background:#c4c4c4"></div>
<div class="t pt" style="left:51.5px;top:633px">Смарт-теги</div>
<div class="t pt" style="left:51.5px;top:648px">Выравнивание текста</div>
<div class="t pt" style="left:193.5px;top:648px">Общее</div>
<div class="a" style="left:191px;top:557px;width:1px;height:104px;background:#c4c4c4"></div>
<!-- help box -->
<div class="a" style="left:578px;top:534px;width:255px;height:239px;border:1px solid #474747;box-shadow:inset 1px 1px 0 #fff"></div>
<div class="t hx" style="left:575.5px;width:255px;top:632px">Имя поля может состоять из 64 знаков с</div>
<div class="t hx" style="left:575.5px;width:255px;top:645.5px;letter-spacing:.1px">учетом пробелов.&nbsp; Для справки по именам</div>
<div class="t hx" style="left:578px;width:255px;top:658px">полей нажмите клавишу F1.</div>
<!-- STATUS -->
<div id="status" class="a"></div>
<div class="t" style="left:12.5px;top:782px;font-size:11.6px;color:#fff">Конструктор.&nbsp; F6 = переключение окон.&nbsp; F1 = справка.</div>
<div class="a" style="left:424px;top:779px;width:1px;height:21px;background:#1e1e1e"></div>
<div class="a" style="left:750px;top:779px;width:1px;height:21px;background:#1e1e1e"></div>
<div class="t" style="left:690.5px;top:782px;font-size:11px;color:#fff">Num Lock</div>
<div class="a" style="left:751px;top:779px;width:98px;height:21px;background:linear-gradient(#8c9096,#6c7076 30%,#55595f 70%,#4a4d52)"></div>
<div class="a" style="left:755.5px;top:780.5px;width:74px;height:18px;border:1px solid #4c4e52;border-radius:3px;background:linear-gradient(#c6c8cb,#b2b5b9 45%,#a3a6aa 55%,#b4b6b9)"></div>
<div class="a" style="left:774px;top:781.5px;width:1px;height:16px;background:#8e9195"></div>
<div class="a" style="left:792.5px;top:781.5px;width:1px;height:16px;background:#8e9195"></div>
<div class="a" style="left:810px;top:781.5px;width:18.5px;height:16px;border-radius:0 2px 2px 0;background:linear-gradient(#fbe5a8,#f8d07a 45%,#f0b440 55%,#fbdc8c)"></div>
<svg style="left:759px;top:784px" width="12" height="11" viewBox="0 0 12 11">
 <rect x="0.5" y="0.5" width="10.5" height="9.5" fill="#3c3c3c"/>
 <rect x="1.3" y="1.3" width="9" height="1.5" fill="#e8e8e8"/>
 <rect x="1.3" y="3.6" width="1.2" height="5.6" fill="#e8e8e8"/>
 <rect x="3.3" y="3.6" width="3" height="2.4" fill="#f4f4f4"/><rect x="7" y="3.6" width="3.2" height="2.4" fill="#f4f4f4"/>
 <rect x="3.3" y="6.8" width="3" height="2.4" fill="#f4f4f4"/><rect x="7" y="6.8" width="3.2" height="2.4" fill="#f4f4f4"/>
</svg>
<svg style="left:777.5px;top:784.5px" width="13" height="11" viewBox="0 0 13 11">
 <g fill="#6a6a6a"><rect x="3.6" y="0" width="2.8" height="2.8"/><rect x="7.2" y="0" width="2.8" height="2.8"/>
 <rect x="0" y="3.6" width="2.8" height="2.8"/><rect x="0" y="7.2" width="2.8" height="2.8"/><rect x="7.2" y="7.2" width="2.8" height="2.8"/></g>
 <g fill="#f4f4f4" stroke="#5a5a5a" stroke-width=".5"><rect x="3.6" y="3.6" width="2.8" height="2.8"/><rect x="7.2" y="3.6" width="2.8" height="2.8"/><rect x="3.6" y="7.2" width="2.8" height="2.8"/></g>
 <path d="M10.5 3.5 L11 5 L12.5 5.5 L11 6 L10.5 7.5 L10 6 L8.5 5.5 L10 5Z" fill="#fff" stroke="#555" stroke-width=".4"/>
</svg>
<svg style="left:795.5px;top:784px" width="14" height="12" viewBox="0 0 14 12">
 <path d="M3.2 0.8 L1.2 2.8 V10.2 H11" fill="none" stroke="#3a3a3a" stroke-width="1.4"/>
 <rect x="4.6" y="3.6" width="2.2" height="5.2" fill="#d0d0d0" stroke="#3a3a3a" stroke-width="1"/>
 <rect x="7.8" y="1" width="2.4" height="7.8" fill="#a8a8a8" stroke="#3a3a3a" stroke-width="1"/>
 <circle cx="12.2" cy="10.2" r="1.1" fill="#fff" stroke="#555" stroke-width=".5"/>
</svg>
<svg style="left:814px;top:783.5px" width="12" height="12" viewBox="0 0 12 12">
 <path d="M1 1 V6 H6Z" fill="#e8d8a8" stroke="#4a4538" stroke-width="1"/>
 <path d="M11 1.5 L4.5 8" stroke="#3a3a3a" stroke-width="1.8"/>
 <rect x="1" y="8.3" width="10.2" height="3" fill="#4a4a4a"/>
 <path d="M2.5 9.8H3.5M4.7 9.8H5.7M6.9 9.8H7.9M9.1 9.8H10.1" stroke="#e8e8e8" stroke-width="1"/>
</svg>
<svg style="left:833px;top:786px" width="12" height="11" viewBox="0 0 12 11"><path d="M9.2 0.2h2v2h-2zM5.5 4h2v2h-2zM9.2 4h2v2h-2zM1.8 7.8h2v2h-2zM5.5 7.8h2v2h-2zM9.2 7.8h2v2h-2z" fill="#e8e8e8" transform="translate(.8 .8)"/><path d="M9.2 0.2h2v2h-2zM5.5 4h2v2h-2zM9.2 4h2v2h-2zM1.8 7.8h2v2h-2zM5.5 7.8h2v2h-2zM9.2 7.8h2v2h-2z" fill="#1a1a1a"/></svg>
<svg style="left:0;top:796px" width="5" height="4" viewBox="0 0 5 4"><path d="M0 0.8 L3 4 H0Z" fill="#d06a28"/><path d="M1 0.5 L4 3.8" stroke="#6a6a6a" stroke-width=".7"/></svg>
</body></html>
